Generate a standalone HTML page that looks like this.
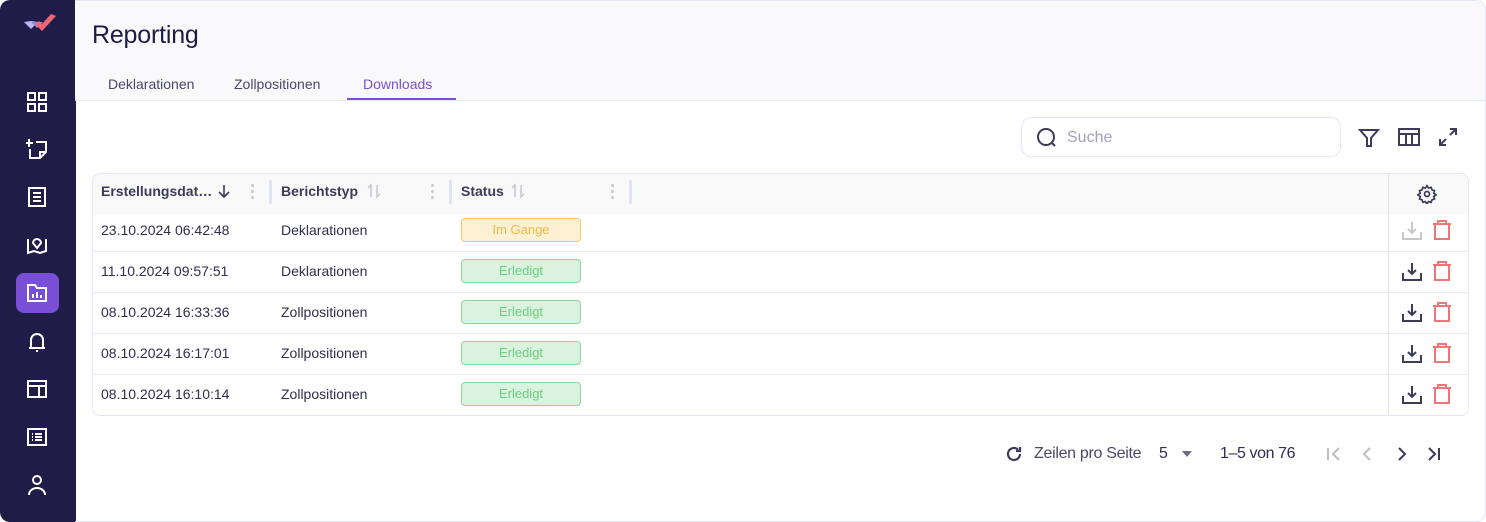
<!DOCTYPE html>
<html><head><meta charset="utf-8"><style>
*{box-sizing:border-box;margin:0;padding:0}
body{width:1486px;height:522px;background:#fff;font-family:"Liberation Sans",sans-serif;color:#2b2a4a;position:relative;overflow:hidden}
.side{position:absolute;left:0;top:0;width:76px;height:522px;background:#1f1d48;border-radius:10px 0 0 10px}
.side svg{position:absolute;left:26px}
.act{position:absolute;left:16px;top:273px;width:43px;height:40px;background:#7a4fd8;border-radius:8px}
.main{position:absolute;left:75px;top:0;width:1411px;height:522px;border:1px solid #e2e6f7;border-left:none;border-radius:0 10px 10px 0;overflow:hidden}
.head{position:absolute;left:0;top:0;width:100%;height:100px;background:#f9f9fb;border-bottom:1px solid #e6e9f7}
h1{position:absolute;left:17px;top:20px;font-size:25px;font-weight:normal;color:#1e1c45;letter-spacing:-.2px}
.tab{position:absolute;top:75px;font-size:14px;color:#4a4868}
.tab.on{color:#7a4fd8}
.ul{position:absolute;left:272px;top:97px;width:109px;height:2px;background:#7a4fd8}
.search{position:absolute;left:946px;top:116px;width:320px;height:40px;border:1px solid #e2e6f7;border-radius:10px}
.search span{position:absolute;left:45px;top:11px;font-size:16px;color:#a4a2bb}
.tbl{position:absolute;left:17px;top:172px;width:1377px;height:243px;border:1px solid #e2e6f7;border-radius:8px;overflow:hidden}
.th{position:absolute;left:0;top:0;width:100%;height:39px;background:#f9f9f9;box-shadow:0 2px 3px rgba(0,0,0,.04)}
.t{position:absolute;font-size:14px;color:#2f2e4d;white-space:nowrap}
.b{font-weight:bold;color:#3c3b5a}
.sep{position:absolute;top:6px;width:3px;height:24px;background:#dfe3f6;border-radius:2px}
.row{position:absolute;left:0;width:100%;height:1px;background:#e6e9f7}
.vl{position:absolute;left:1295px;top:0;width:1px;height:243px;background:#e2e2e2}
.badge{position:absolute;left:368px;width:120px;height:24px;border-radius:4px;font-size:13px;text-align:center;line-height:22px}
.y{background:#fdf0d3;border:1px solid #f5c76a;color:#f0b84a}
.g{background:#d9f3de;border:1px solid #8fd69c;color:#6dcc7e}
.dots{position:absolute;top:10px;width:3px}
.dots i{display:block;width:3px;height:3px;background:#c8c8d0;border-radius:50%;margin-bottom:3px}
</style></head><body>
<div class="side">
<svg style="left:23px;top:12px" width="36" height="24" viewBox="0 0 36 24"><path d="M1 10l7 7 7-7-7-1z" fill="#b9b9f2"/><path d="M8 10l6 6 6-6z" fill="#8f87e0"/><path d="M12 12l7 7 14-15-5-2-9 10-3-3z" fill="#ef6574"/></svg>
<svg style="top:91px" width="22" height="22" viewBox="0 0 22 22" fill="none" stroke="#fff" stroke-width="2"><rect x="2" y="2" width="7" height="7"/><rect x="13" y="2" width="7" height="7"/><rect x="2" y="13" width="7" height="7"/><rect x="13" y="13" width="7" height="7"/></svg>
<svg style="top:138px" width="22" height="22" viewBox="0 0 22 22" fill="none" stroke="#fff" stroke-width="2"><path d="M3 1v8M-1 5h8M4 11v9h10l6-6V4H10M14 20v-6h6"/></svg>
<svg style="top:186px" width="22" height="22" viewBox="0 0 22 22" fill="none" stroke="#fff" stroke-width="2"><rect x="3" y="2" width="16" height="18"/><path d="M7 7h8M7 11h8M7 15h8"/></svg>
<svg style="top:233px" width="22" height="22" viewBox="0 0 22 22" fill="none" stroke="#fff" stroke-width="2"><path d="M2 6v14l6-2 6 2 6-2V6M11 15l-4-5a4 4 0 1 1 8 0z"/></svg>
<div class="act"></div>
<svg style="top:282px" width="22" height="22" viewBox="0 0 22 22" fill="none" stroke="#fff" stroke-width="2"><path d="M2 3h7l2 3h9v13H2z"/><path d="M7 16v-4M11 16v-6M15 16v-3"/></svg>
<svg style="top:331px" width="22" height="22" viewBox="0 0 22 22" fill="none" stroke="#fff" stroke-width="2"><path d="M5 17V9a6 6 0 0 1 12 0v8zM3 17h16M10 20h2"/></svg>
<svg style="top:378px" width="22" height="22" viewBox="0 0 22 22" fill="none" stroke="#fff" stroke-width="2"><rect x="2" y="3" width="18" height="16"/><path d="M2 8h18M13 8v11"/></svg>
<svg style="top:426px" width="22" height="22" viewBox="0 0 22 22" fill="none" stroke="#fff" stroke-width="2"><rect x="2" y="3" width="18" height="16"/><path d="M6 8h1M6 11h1M6 14h1M9 8h7M9 11h7M9 14h7"/></svg>
<svg style="top:474px" width="22" height="22" viewBox="0 0 22 22" fill="none" stroke="#fff" stroke-width="2"><circle cx="11" cy="6" r="4"/><path d="M3 21a8 7 0 0 1 16 0"/></svg>
</div>
<div class="main">
<div class="head">
<h1>Reporting</h1>
<div class="tab" style="left:33px">Deklarationen</div>
<div class="tab" style="left:159px">Zollpositionen</div>
<div class="tab on" style="left:288px">Downloads</div>
<div class="ul"></div>
</div>
<div class="search"><svg style="position:absolute;left:14px;top:9px" width="22" height="22" viewBox="0 0 22 22" fill="none" stroke="#3c3b5a" stroke-width="2"><circle cx="10" cy="10" r="8"/><path d="M16 16l3 3"/></svg><span>Suche</span></div>
<svg style="position:absolute;left:1283px;top:126px" width="22" height="22" viewBox="0 0 22 22" fill="none" stroke="#3c3b5a" stroke-width="2"><path d="M2 3h18l-7 8v8h-4v-8z"/></svg>
<svg style="position:absolute;left:1323px;top:126px" width="22" height="20" viewBox="0 0 22 20" fill="none" stroke="#3c3b5a" stroke-width="2"><rect x="1" y="2" width="20" height="16"/><path d="M1 7h20M8 7v11M14 7v11"/></svg>
<svg style="position:absolute;left:1363px;top:126px" width="20" height="20" viewBox="0 0 20 20" fill="none" stroke="#3c3b5a" stroke-width="2"><path d="M12 2h6v6M18 2l-6 6M8 18H2v-6M2 18l6-6"/></svg>
<div class="tbl">
<div class="th"></div>
<div class="t b" style="left:8px;top:9px">Erstellungsdat…</div>
<svg style="position:absolute;left:124px;top:9px" width="14" height="16" viewBox="0 0 14 16" fill="none" stroke="#3c3b5a" stroke-width="1.6"><path d="M7 2v12M2 9l5 5 5-5"/></svg>
<div class="dots" style="left:158px"><i></i><i></i><i></i></div>
<div class="sep" style="left:176px"></div>
<div class="t b" style="left:188px;top:9px">Berichtstyp</div>
<svg style="position:absolute;left:274px;top:9px" width="14" height="16" viewBox="0 0 14 16" fill="none" stroke="#c5c5cc" stroke-width="1.5"><path d="M4 14V2L1 5M10 2v12l3-3"/></svg>
<div class="dots" style="left:338px"><i></i><i></i><i></i></div>
<div class="sep" style="left:356px"></div>
<div class="t b" style="left:368px;top:9px">Status</div>
<svg style="position:absolute;left:418px;top:9px" width="14" height="16" viewBox="0 0 14 16" fill="none" stroke="#c5c5cc" stroke-width="1.5"><path d="M4 14V2L1 5M10 2v12l3-3"/></svg>
<div class="dots" style="left:518px"><i></i><i></i><i></i></div>
<div class="sep" style="left:536px"></div>
<svg style="position:absolute;left:1324px;top:10px" width="20" height="20" viewBox="0 0 24 24" fill="none" stroke="#3c3b5a" stroke-width="2"><circle cx="12" cy="12" r="3"/><path d="M12 2l2 3 3-1 1 3 3 1-1 3 3 2-3 2 1 3-3 1-1 3-3-1-2 3-2-3-3 1-1-3-3-1 1-3-3-2 3-2-1-3 3-1 1-3 3 1z"/></svg>
<div class="vl"></div>
<div class="row" style="top:77px"></div><div class="row" style="top:118px"></div><div class="row" style="top:159px"></div><div class="row" style="top:200px"></div>
<div class="t" style="left:8px;top:48px">23.10.2024 06:42:48</div><div class="t" style="left:188px;top:48px">Deklarationen</div><div class="badge y" style="top:44px">Im Gange</div>
<div class="t" style="left:8px;top:89px">11.10.2024 09:57:51</div><div class="t" style="left:188px;top:89px">Deklarationen</div><div class="badge g" style="top:85px">Erledigt</div>
<div class="t" style="left:8px;top:130px">08.10.2024 16:33:36</div><div class="t" style="left:188px;top:130px">Zollpositionen</div><div class="badge g" style="top:126px">Erledigt</div>
<div class="t" style="left:8px;top:171px">08.10.2024 16:17:01</div><div class="t" style="left:188px;top:171px">Zollpositionen</div><div class="badge g" style="top:167px">Erledigt</div>
<div class="t" style="left:8px;top:212px">08.10.2024 16:10:14</div><div class="t" style="left:188px;top:212px">Zollpositionen</div><div class="badge g" style="top:208px">Erledigt</div>
<svg style="position:absolute;left:1308px;top:46px" width="22" height="190" viewBox="0 0 22 190" fill="none" stroke-width="2">
<g stroke="#c8c8cc"><path d="M2 12v7h18v-7M11 2v11M7 9l4 4 4-4"/></g>
<g stroke="#3c3b5a"><path d="M2 53v7h18v-7M11 43v11M7 50l4 4 4-4"/><path d="M2 94v7h18v-7M11 84v11M7 91l4 4 4-4"/><path d="M2 135v7h18v-7M11 125v11M7 132l4 4 4-4"/><path d="M2 176v7h18v-7M11 166v11M7 173l4 4 4-4"/></g>
</svg>
<svg style="position:absolute;left:1339px;top:45px" width="22" height="190" viewBox="0 0 22 190" fill="none" stroke="#ee7775" stroke-width="2">
<path d="M1 5h18M6 5V2h8v3M3 5v15h14V5"/><path d="M1 46h18M6 46v-3h8v3M3 46v15h14V46"/><path d="M1 87h18M6 87v-3h8v3M3 87v15h14V87"/><path d="M1 128h18M6 128v-3h8v3M3 128v15h14v-15"/><path d="M1 169h18M6 169v-3h8v3M3 169v15h14v-15"/>
</svg>
</div>
<svg style="position:absolute;left:929px;top:443px" width="20" height="20" viewBox="0 0 20 20" fill="none" stroke="#3c3b5a" stroke-width="2.2"><path d="M16 10a6 6 0 1 1-2-4.5M16 3v4h-4"/></svg>
<div class="t" style="left:959px;top:444px;font-size:16px;color:#4a4868;letter-spacing:-.3px">Zeilen pro Seite</div>
<div class="t" style="left:1084px;top:444px;font-size:16px">5</div>
<svg style="position:absolute;left:1107px;top:450px" width="10" height="6"><path d="M0 0h10L5 6z" fill="#6d6c80"/></svg>
<div class="t" style="left:1145px;top:444px;font-size:16px;letter-spacing:-.4px">1–5 von 76</div>
<svg style="position:absolute;left:1250px;top:444px" width="140" height="18" viewBox="0 0 140 18" fill="none" stroke-width="2"><g stroke="#bdbdc4"><path d="M3 3v12M14 3l-6 6 6 6M45 3l-6 6 6 6"/></g><g stroke="#3c3b5a"><path d="M74 3l6 6-6 6M104 3l6 6-6 6M114 3v12"/></g></svg>
</div>
</body></html>
